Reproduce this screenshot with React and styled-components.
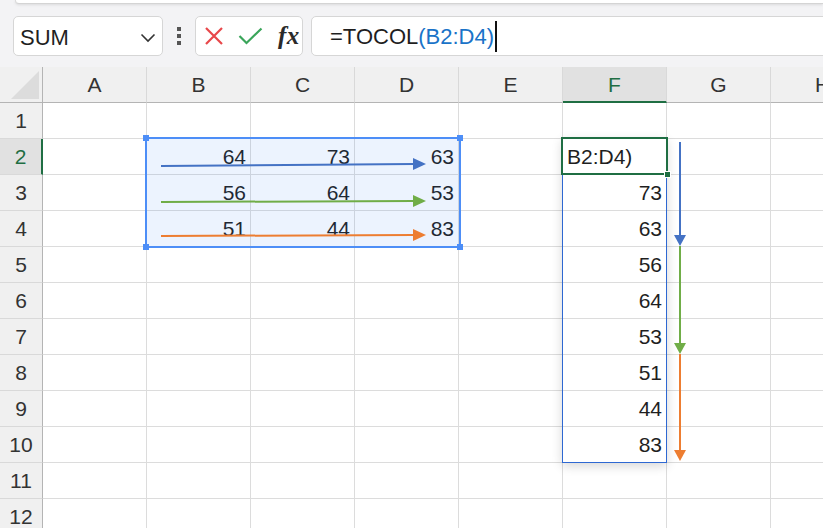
import styled, { createGlobalStyle } from 'styled-components'

const GlobalStyle = createGlobalStyle`
  html, body {
    margin: 0;
    padding: 0;
    background: #f3f3f5;
    overflow: hidden;
  }
  body {
    font-family: 'Liberation Sans', Arial, sans-serif;
    color: #1f1f1f;
  }
`

const COLS = ['A', 'B', 'C', 'D', 'E', 'F', 'G', 'H']
const ROWS = 13

const DATA = {
  B2: '64', C2: '73', D2: '63',
  B3: '56', C3: '64', D3: '53',
  B4: '51', C4: '44', D4: '83',
  F3: '73', F4: '63', F5: '56', F6: '64', F7: '53', F8: '51', F9: '44', F10: '83',
}

const BLUE = '#4472c4'
const GREEN = '#70ad47'
const ORANGE = '#ed7d31'
const XL_GREEN = '#1f6e43'

const Page = styled.div`
  width: 823px;
  height: 528px;
  overflow: hidden;
  background: #f3f3f5;
`

const TopPanel = styled.div`
  height: 3px;
  margin-left: 15px;
  background: #fff;
  border-left: 1px solid #d8d8d8;
  border-bottom: 1px solid #d4d4d4;
  border-bottom-left-radius: 6px;
  box-shadow: 0 1px 3px rgba(0, 0, 0, 0.1);
`

const Toolbar = styled.div`
  display: flex;
  align-items: stretch;
  height: 40px;
  padding: 12px 0 11px 13px;
`

const Box = styled.div`
  box-sizing: border-box;
  height: 40px;
  background: #fff;
  border: 1px solid #d6d6d6;
  border-radius: 5px;
`

const NameBox = styled(Box)`
  width: 150px;
  display: flex;
  align-items: center;
  justify-content: space-between;
  padding: 3px 6px 0 6px;
  font-size: 22px;
`

const Dots = styled.div`
  width: 32px;
  display: flex;
  flex-direction: column;
  align-items: center;
  justify-content: center;
  gap: 3px;
  span {
    width: 4px;
    height: 4px;
    background: #555;
  }
`

const FxBox = styled(Box)`
  width: 108px;
  margin-right: 8px;
  display: flex;
  align-items: center;
  padding-left: 8px;
  gap: 14px;
`

const FxText = styled.span`
  font-family: 'Liberation Serif', 'Times New Roman', serif;
  font-style: italic;
  font-weight: bold;
  font-size: 25px;
  color: #2a2a2a;
  margin-left: 1px;
  letter-spacing: 0.5px;
`

const FormulaBox = styled(Box)`
  flex: 1;
  margin-right: -12px;
  display: flex;
  align-items: center;
  padding: 2px 0 0 18px;
  font-size: 22px;
`

const Ref = styled.span`
  color: #1a73c8;
`

const Caret = styled.span`
  display: inline-block;
  width: 2px;
  height: 31px;
  background: #111;
  margin-left: 1px;
  margin-top: -2px;
`

const Sheet = styled.div`
  position: relative;
  height: 461px;
  overflow: hidden;
  background: #fff;
`

const Grid = styled.div`
  display: grid;
  grid-template-columns: 43px repeat(${COLS.length}, 104px);
  grid-auto-rows: 36px;
  font-size: 21px;
`

const HeadBase = styled.div`
  box-sizing: border-box;
  display: flex;
  align-items: center;
  justify-content: center;
  line-height: 35px;
  color: #333;
`

const Corner = styled(HeadBase)`
  position: relative;
  background: #f0f0f0;
  border-right: 1px solid #b4b4b4;
  border-bottom: 1px solid #b4b4b4;
  &::after {
    content: '';
    position: absolute;
    left: 11px;
    top: 4px;
    width: 28px;
    height: 28px;
    background: #dcdcdc;
    clip-path: polygon(100% 0, 100% 100%, 0 100%);
  }
`

const ColHeader = styled(HeadBase)`
  background: ${(p) => (p.$active ? '#e1e1e1' : '#f0f0f0')};
  color: ${(p) => (p.$active ? XL_GREEN : '#333')};
  border-right: 1px solid #d9d9d9;
  border-bottom: ${(p) => (p.$active ? `2px solid ${XL_GREEN}` : '1px solid #b4b4b4')};
`

const RowHeader = styled(HeadBase)`
  background: ${(p) => (p.$active ? '#e1e1e1' : '#f0f0f0')};
  color: ${(p) => (p.$active ? XL_GREEN : '#333')};
  border-right: ${(p) => (p.$active ? `2px solid ${XL_GREEN}` : '1px solid #b4b4b4')};
  border-bottom: 1px solid #d9d9d9;
`

const Cell = styled.div`
  box-sizing: border-box;
  border-right: 1px solid #dcdcdc;
  border-bottom: 1px solid #dcdcdc;
  line-height: 35px;
  padding: 0 4px;
  text-align: ${(p) => p.$align};
  white-space: nowrap;
  overflow: visible;
`

const Selection = styled.div`
  position: absolute;
  box-sizing: border-box;
  left: 145px;
  top: 70px;
  width: 316px;
  height: 111px;
  border: 2px solid #4d8ef7;
  background: rgba(47, 120, 240, 0.09);
`

const Handle = styled.span`
  position: absolute;
  width: 6px;
  height: 6px;
  background: #4d8ef7;
  ${(p) => (p.$right ? 'right: -4px;' : 'left: -4px;')}
  ${(p) => (p.$bottom ? 'bottom: -4px;' : 'top: -4px;')}
`

const Spill = styled.div`
  position: absolute;
  box-sizing: border-box;
  left: 562px;
  top: 71px;
  width: 105px;
  height: 325px;
  border: 1px solid #2e68d2;
  box-shadow: 0 3px 10px rgba(0, 0, 0, 0.16);
`

const ActiveCell = styled.div`
  position: absolute;
  box-sizing: border-box;
  left: 561px;
  top: 70px;
  width: 107px;
  height: 38px;
  border: 2px solid ${XL_GREEN};
`

const FillHandle = styled.span`
  position: absolute;
  right: -5px;
  bottom: -5px;
  width: 7px;
  height: 7px;
  box-sizing: border-box;
  border: 1px solid #fff;
  background: ${XL_GREEN};
`

const Arrows = styled.svg`
  position: absolute;
  left: 0;
  top: 0;
  pointer-events: none;
`

const HArrow = ({ y1, y2, color }) => (
  <g>
    <line x1="161" y1={y1} x2="414" y2={y2} stroke={color} strokeWidth="2" />
    <polygon points={`413,${y2 - 6} 426,${y2} 413,${y2 + 6}`} fill={color} />
  </g>
)

const VArrow = ({ from, to, color }) => (
  <g>
    <line x1="680" y1={from} x2="680" y2={to - 9} stroke={color} strokeWidth="2" />
    <polygon points={`674,${to - 11} 680,${to} 686,${to - 11}`} fill={color} />
  </g>
)

export default function App() {
  const cells = []
  cells.push(<Corner key="corner" />)
  COLS.forEach((c) =>
    cells.push(
      <ColHeader key={'h' + c} $active={c === 'F'}>
        {c}
      </ColHeader>
    )
  )
  for (let r = 1; r <= ROWS; r++) {
    cells.push(
      <RowHeader key={'r' + r} $active={r === 2}>
        {r}
      </RowHeader>
    )
    COLS.forEach((c) => {
      const id = c + r
      const isEdit = id === 'F2'
      cells.push(
        <Cell key={id} $align={isEdit ? 'left' : 'right'}>
          {isEdit ? 'B2:D4)' : DATA[id] || ''}
        </Cell>
      )
    })
  }

  return (
    <Page>
      <GlobalStyle />
      <TopPanel />
      <Toolbar>
        <NameBox>
          <span>SUM</span>
          <svg width="16" height="10" viewBox="0 0 16 10">
            <path d="M1.5 1.5 L8 8 L14.5 1.5" fill="none" stroke="#333" strokeWidth="1.6" />
          </svg>
        </NameBox>
        <Dots>
          <span />
          <span />
          <span />
        </Dots>
        <FxBox>
          <svg width="20" height="20" viewBox="0 0 20 20">
            <path d="M2 2 L18 18 M18 2 L2 18" stroke="#e8474a" strokeWidth="2.2" />
          </svg>
          <svg width="25" height="18" viewBox="0 0 25 18">
            <path d="M1.5 9 L8.5 16 L23.5 1.5" fill="none" stroke="#3aa55a" strokeWidth="2.2" />
          </svg>
          <FxText>fx</FxText>
        </FxBox>
        <FormulaBox>
          <span>=TOCOL</span>
          <Ref>(B2:D4)</Ref>
          <Caret />
        </FormulaBox>
      </Toolbar>
      <Sheet>
        <Grid>{cells}</Grid>
        <Selection>
          <Handle />
          <Handle $right />
          <Handle $bottom />
          <Handle $right $bottom />
        </Selection>
        <Spill />
        <ActiveCell>
          <FillHandle />
        </ActiveCell>
        <Arrows width="823" height="461" viewBox="0 67 823 461">
          <HArrow y1={166} y2={164} color={BLUE} />
          <HArrow y1={202} y2={201} color={GREEN} />
          <HArrow y1={236} y2={235} color={ORANGE} />
          <VArrow from={142} to={246} color={BLUE} />
          <VArrow from={246} to={354} color={GREEN} />
          <VArrow from={354} to={461} color={ORANGE} />
        </Arrows>
      </Sheet>
    </Page>
  )
}
